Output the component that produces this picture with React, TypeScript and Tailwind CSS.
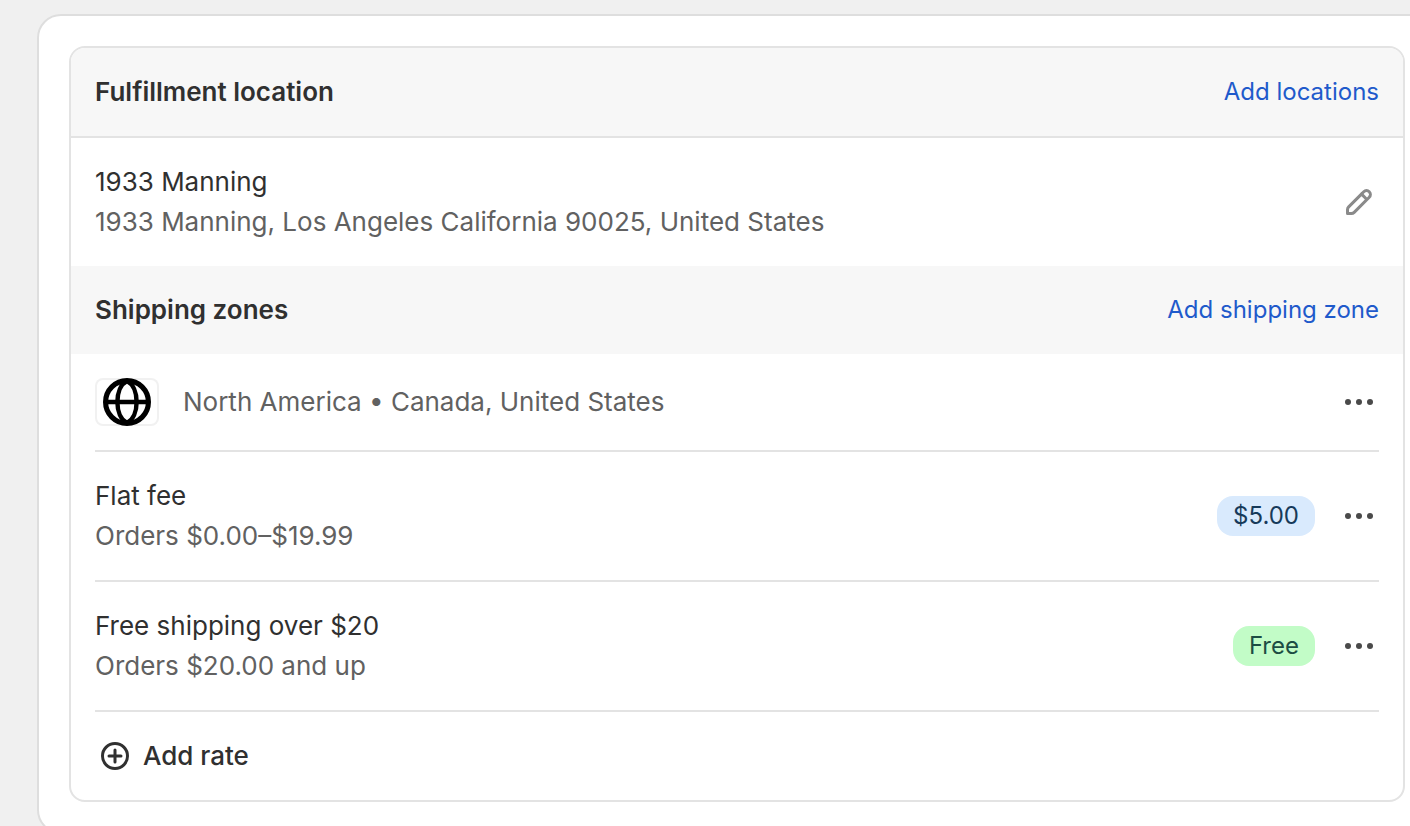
import type { ReactNode } from 'react';

function EditIcon() {
  return (
    <svg viewBox="0 0 20 20" className="size-10 text-[#8a8a8a]" fill="currentColor" aria-hidden="true">
      <path
        fillRule="evenodd"
        d="M15.655 4.344a2.695 2.695 0 0 0-3.81 0l-.599.599-.009-.01-1.06 1.06.008.01-5.88 5.88a2.75 2.75 0 0 0-.805 1.944v1.922a.75.75 0 0 0 .75.75h1.922a2.75 2.75 0 0 0 1.944-.806l7.54-7.539a2.695 2.695 0 0 0 0-3.81Zm-4.409 2.72 1.69 1.69-5.88 5.88a1.25 1.25 0 0 1-.884.366h-1.172v-1.172c0-.331.132-.65.366-.884l5.88-5.88Zm2.75.629.599-.599a1.195 1.195 0 1 0-1.69-1.689l-.598.599 1.69 1.689Z"
      />
    </svg>
  );
}

function MoreIcon() {
  return (
    <svg viewBox="0 0 20 20" className="size-10 text-[#4a4a4a]" fill="currentColor" aria-hidden="true">
      <circle cx="4.5" cy="10" r="1.5" />
      <circle cx="10" cy="10" r="1.5" />
      <circle cx="15.5" cy="10" r="1.5" />
    </svg>
  );
}

function PlusCircleIcon() {
  return (
    <svg
      viewBox="0 0 20 20"
      className="size-10"
      fill="none"
      stroke="currentColor"
      strokeWidth="1.5"
      strokeLinecap="round"
      aria-hidden="true"
    >
      <circle cx="10" cy="10" r="6.25" />
      <path d="M10 7v6M7 10h6" />
    </svg>
  );
}

function GlobeIcon() {
  return (
    <svg
      viewBox="3 3 14 14"
      className="size-12 text-black"
      fill="none"
      stroke="currentColor"
      strokeWidth="1.5"
      aria-hidden="true"
    >
      <circle cx="10" cy="10" r="6.25" />
      <path strokeWidth="1.3" d="M3.75 10h12.5" />
      <path
        strokeWidth="1.3"
        d="M10 3.9C8.2 4.8 7.2 7.2 7.2 10s1 5.200 2.800 6.100C11.800 15.200 12.800 12.800 12.800 10S11.800 4.800 10 3.900Z"
      />
    </svg>
  );
}

function IconButton({ label, children }: { label: string; children: ReactNode }) {
  return (
    <button type="button" aria-label={label} className="shrink-0 rounded-lg">
      {children}
    </button>
  );
}

function SectionHeader({ title, action }: { title: string; action: string }) {
  return (
    <div className="flex items-center justify-between bg-[#f7f7f7] p-6">
      <h2 className="font-semibold">{title}</h2>
      <a href="#" className="text-2xl/10 text-[#1f5acb]">
        {action}
      </a>
    </div>
  );
}

type Rate = { name: string; condition: string; price: string; tone: string };

const rates: Rate[] = [
  { name: 'Flat fee', condition: 'Orders $0.00–$19.99', price: '$5.00', tone: 'bg-[#d9eafd] text-[#163a5a]' },
  { name: 'Free shipping over $20', condition: 'Orders $20.00 and up', price: 'Free', tone: 'bg-[#c2fcc7] text-[#1c4d43]' },
];

export default function App() {
  return (
    <main className="h-screen overflow-hidden bg-[#f0f0f0] pt-[14px] pl-[37px] font-['Inter',sans-serif] text-[26px]/10 text-[#303030]">
      <div className="-mr-7 rounded-3xl border-2 border-[#dedede] bg-white py-[30px] pr-[31px] pl-[30px]">
        <div className="overflow-hidden rounded-2xl border-2 border-[#e3e3e3]">
          <section>
            <div className="border-b-2 border-[#e3e3e3]">
              <SectionHeader title="Fulfillment location" action="Add locations" />
            </div>
            <div className="flex items-center justify-between p-6">
              <div>
                <p>1933 Manning</p>
                <p className="text-[#616161]">1933 Manning, Los Angeles California 90025, United States</p>
              </div>
              <IconButton label="Edit location">
                <EditIcon />
              </IconButton>
            </div>
          </section>

          <section>
            <SectionHeader title="Shipping zones" action="Add shipping zone" />
            <div className="px-6">
              <div className="flex items-center gap-6 py-6">
                <span className="flex h-12 w-16 items-center justify-center rounded-lg bg-white inset-ring-2 inset-ring-[#f1f1f1]">
                  <GlobeIcon />
                </span>
                <p className="grow text-[#616161]">North America • Canada, United States</p>
                <IconButton label="Zone actions">
                  <MoreIcon />
                </IconButton>
              </div>
              <ul>
                {rates.map((rate) => (
                  <li key={rate.name} className="flex items-center gap-6 border-t-2 border-[#e3e3e3] py-6">
                    <div className="grow">
                      <p>{rate.name}</p>
                      <p className="text-[#616161]">{rate.condition}</p>
                    </div>
                    <span className={`rounded-2xl px-4 text-2xl/10 ${rate.tone}`}>{rate.price}</span>
                    <IconButton label={`Actions for ${rate.name}`}>
                      <MoreIcon />
                    </IconButton>
                  </li>
                ))}
              </ul>
              <div className="border-t-2 border-[#e3e3e3] py-6">
                <button type="button" className="flex items-center gap-2 font-medium">
                  <PlusCircleIcon />
                  Add rate
                </button>
              </div>
            </div>
          </section>
        </div>
      </div>
    </main>
  );
}
